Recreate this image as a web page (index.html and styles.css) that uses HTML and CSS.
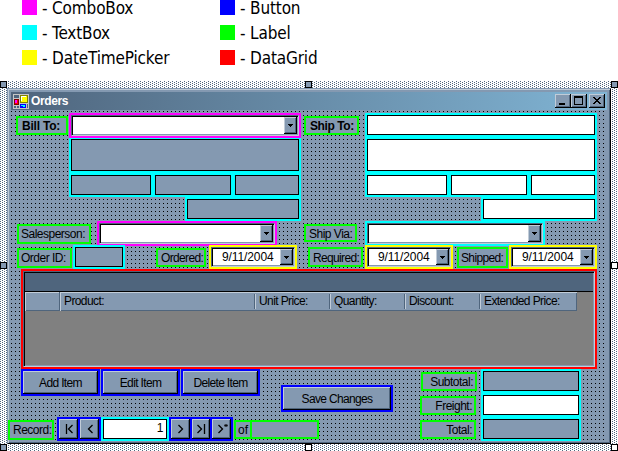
FILE: index.html
```html
<!DOCTYPE html>
<html lang="en">
<head>
<meta charset="utf-8">
<title>Orders</title>
<link rel="stylesheet" href="styles.css">
</head>
<body>
<svg width="0" height="0" class="defs"><symbol id="arrow" viewBox="0 0 5 3"><path d="M0 0H5V1H0ZM1 1H4V2H1ZM2 2H3V3H2Z"/></symbol></svg>
<ul class="legend">
  <li><i class="magenta"></i>- ComboBox</li><li><i class="blue"></i>- Button</li>
  <li><i class="cyan"></i>- TextBox</li><li><i class="green"></i>- Label</li>
  <li><i class="yellow"></i>- DateTimePicker</li><li><i class="red"></i>- DataGrid</li>
</ul>
<main class="surface">
  <b class="handle tl"></b><b class="handle tc"></b><b class="handle tr"></b>
  <b class="handle ml"></b><b class="handle mr open"></b>
  <b class="handle bl"></b><b class="handle bc open"></b><b class="handle br open"></b>
  <section class="window">
    <header class="title">
      <svg class="app" width="16" height="16" viewBox="0 0 16 16" shape-rendering="crispEdges"><path fill="#c6c6c6" d="M0 0H16V15H0Z"/><path fill="#4f657d" d="M1 1H6V4H1ZM1 12H3V14H1ZM4 12H6V14H4ZM14 10H15V14H14Z"/><path fill="#800000" d="M1 5H6V11H1Z"/><path fill="#f0f" d="M2 6H4V9H2Z"/><path fill="#f00" d="M4 6H5V10H2V9H4Z"/><path fill="#808000" d="M7 1H15V9H7Z"/><path fill="#ff0" d="M8 2H14V8H8Z"/><path fill="#fff" d="M8 2H13V3H9V7H8Z"/><path fill="#00f" d="M7 10H13V14H7Z"/><path fill="#0ff" d="M8 11H12V13H10V12H8Z"/></svg>
      <h1>Orders</h1>
      <span class="cap"><svg width="16" height="14" shape-rendering="crispEdges"><path d="M4 9H10V11H4Z"/></svg></span>
      <span class="cap"><svg width="16" height="14" shape-rendering="crispEdges"><path fill-rule="evenodd" d="M3 2H12V11H3ZM4 4V10H11V4Z"/></svg></span>
      <span class="cap close"><svg width="16" height="14" shape-rendering="crispEdges"><path d="M4 3H6V4H7V5H9V4H10V3H12V4H11V5H10V6H9V7H10V8H11V9H12V10H10V9H9V8H7V9H6V10H4V9H5V8H6V7H7V6H6V5H5V4H4Z"/></svg></span>
    </header>
    <div class="client">
      <div class="addresses">
        <div class="label bold billto">Bill To:</div>
        <div class="fields">
          <div class="combo magenta-b"><span class="inset"><span class="drop"><svg width="5" height="3"><use href="#arrow"/></svg></span></span></div>
          <div class="block short">
            <div class="tb tall"></div>
            <div class="trio"><div class="tb city"></div><div class="tb region"></div><div class="tb zip"></div></div>
          </div>
          <div class="country"><div class="tb"></div></div>
        </div>
        <div class="label bold shipto">Ship To:</div>
        <div class="fields white ship">
          <div class="block">
            <div class="tb"></div><div class="tb tall"></div>
            <div class="trio"><div class="tb city"></div><div class="tb region"></div><div class="tb zip"></div></div>
          </div>
          <div class="country"><div class="tb"></div></div>
        </div>
      </div>
      <div class="row">
        <div class="label sales">Salesperson:</div>
        <div class="combo magenta-b salesbox"><span class="inset"><span class="drop"><svg width="5" height="3"><use href="#arrow"/></svg></span></span></div>
        <div class="label via">Ship Via:</div>
        <div class="combo cyan-b viabox"><span class="inset"><span class="drop"><svg width="5" height="3"><use href="#arrow"/></svg></span></span></div>
      </div>
      <div class="row">
        <div class="label orderid">Order ID:</div>
        <div class="idbox"><div class="tb"></div></div>
        <div class="label ordered">Ordered:</div>
        <div class="combo date d1"><span class="inset"><time>9/11/2004</time><span class="drop"><svg width="5" height="3"><use href="#arrow"/></svg></span></span></div>
        <div class="label required">Required:</div>
        <div class="combo date d2"><span class="inset"><time>9/11/2004</time><span class="drop"><svg width="5" height="3"><use href="#arrow"/></svg></span></span></div>
        <div class="label shipped">Shipped:</div>
        <div class="combo date d3"><span class="inset"><time>9/11/2004</time><span class="drop"><svg width="5" height="3"><use href="#arrow"/></svg></span></span></div>
      </div>
      <div class="grid"><div class="inset">
        <div class="caption"></div>
        <div class="heads"><span class="h0"></span><span class="h1">Product:</span><span>Unit Price:</span><span>Quantity:</span><span>Discount:</span><span class="h5">Extended Price:</span></div>
      </div></div>
      <div class="bottom">
        <div class="actions">
          <div class="commands">
            <div class="btn"><button>Add Item</button></div><div class="btn"><button>Edit Item</button></div><div class="btn"><button>Delete Item</button></div>
            <div class="btn save"><button>Save Changes</button></div>
          </div>
          <div class="nav">
            <div class="label record">Record:</div>
            <div class="btn first"><button><svg width="16" height="16"><path d="M5.5 3V13M11.5 4L7.5 8L11.5 12"/></svg></button><button><svg width="16" height="16"><path d="M10.5 4L6.5 8L10.5 12"/></svg></button></div>
            <div class="number"><div class="tb">1</div></div>
            <div class="btn last"><button><svg width="16" height="16"><path d="M6.5 4L10.5 8L6.5 12"/></svg></button><button><svg width="16" height="16"><path d="M4.5 4L8.5 8L4.5 12M11.5 3V13"/></svg></button><button><svg width="16" height="16"><path d="M4.5 4L8.5 8L4.5 12"/><path class="star" d="M10 4.5H14M12 3V6M10.8 3.2L13.2 5.8M13.2 3.2L10.8 5.8"/></svg></button></div>
            <div class="label of">of</div><div class="label count"></div>
          </div>
        </div>
        <div class="totals"><div class="label sub">Subtotal:</div><div class="label">Freight:</div><div class="label">Total:</div></div>
        <div class="amounts"><div class="tb"></div><div class="tb freight"></div><div class="tb"></div></div>
      </div>
    </div>
  </section>
</main>
</body>
</html>
```
FILE: styles.css
```css
:root { --face: #8499b1; --dark: #4f657d; --light: #c1ccd8; }
* { box-sizing: border-box; }
body { margin: 0; width: 618px; height: 451px; overflow: hidden; background: #fff; color: #000; font: 12px/14px "Liberation Sans", Arial, sans-serif; letter-spacing: -.5px; }
.defs { position: absolute; }

.legend { display: grid; grid-template-columns: 198px 200px; grid-auto-rows: 25px; height: 81px; margin: 0; padding: 0 0 0 22px; list-style: none; font: 17px/17px "DejaVu Sans Condensed", "DejaVu Sans", sans-serif; font-stretch: condensed; letter-spacing: -.15px; }
.legend li { display: flex; gap: 5px; white-space: nowrap; }
.legend i { width: 15px; height: 15px; }
.magenta { background: #f0f; } .blue { background: #00f; } .cyan { background: #0ff; }
.green { background: #0f0; } .yellow { background: #ff0; } .red { background: #f00; }

.surface { position: relative; height: 370px; padding: 7px; background: conic-gradient(from 270deg at 1px 1px, var(--dark) 25%, transparent 0) 0 0 / 4px 2px, conic-gradient(from 270deg at 1px 1px, var(--dark) 25%, transparent 0) 2px 1px / 4px 2px; }
.handle { position: absolute; width: 7px; height: 7px; border: 1px solid #000; background: var(--face); }
.open { background: #fff; }
.tl, .tc, .tr { top: 0; } .ml, .mr { top: 181px; } .bl, .bc, .br { bottom: 0; }
.tl, .ml, .bl { left: 0; } .tc, .bc { left: 305px; } .tr, .mr, .br { right: 0; }

.window { width: 604px; height: 356px; padding: 3px; border: 1px solid; border-color: var(--face) #000 #000 var(--face); background: var(--face); box-shadow: inset 1px 1px var(--light), inset -1px -1px var(--dark); }
.title { display: flex; align-items: center; height: 18px; padding: 0 2px; background: linear-gradient(90deg, #4f657d, #80b4d4); }
.app { margin-top: 1px; }
h1 { flex: 1; margin: 0 0 0 2px; color: #fff; font-size: 12px; line-height: 16px; letter-spacing: -.4px; }
.cap { width: 16px; height: 14px; background: var(--face); box-shadow: inset -1px -1px #000, inset 1px 1px var(--light), inset -2px -2px var(--dark); }
.cap svg { display: block; }
.close { margin-left: 2px; }

.client { height: 330px; margin-top: 1px; background: conic-gradient(from 270deg at 1px 1px, #000 25%, transparent 0) 0 0 / 4px 4px; width: 596px; }
.label { flex: none; border: 2px solid #0f0; background: var(--face); white-space: nowrap; padding-left: 2px; height: 20px; line-height: 17px; margin-top: 3px; }
.bold { font-weight: bold; height: 19px; padding-left: 4px; letter-spacing: -.2px; }
.addresses { display: flex; height: 110px; padding-top: 2px; }
.billto { width: 52px; margin-left: 5px; }
.shipto { width: 55px; margin-left: 3px; letter-spacing: -.4px; }
.fields { width: 232px; margin-left: 1px; }
.ship { margin-left: 6px; }
.tb { height: 20px; border: 1px solid #000; background: var(--face); }
.white .tb { background: #fff; }
.tb.tall { height: 32px; }
.block { display: grid; gap: 4px; padding: 2px; background: #0ff; }
.short { padding-top: 1px; }
.trio { display: grid; grid-template-columns: 80px 76px 64px; gap: 4px; }
.country { width: 116px; margin-left: auto; padding: 2px; background: #0ff; }

.combo { flex: none; height: 25px; border: 2px solid; }
.magenta-b { border-color: #f0f; } .cyan-b { border-color: #0ff; }
.inset { display: flex; height: 100%; background: #fff; border: 1px solid; border-color: var(--dark) var(--light) var(--light) var(--dark); box-shadow: inset 1px 1px #000, inset -1px -1px var(--face); padding: 1px; justify-content: flex-end; }
.drop { display: flex; align-items: center; justify-content: center; width: 13px; height: 100%; background: var(--face); box-shadow: inset -1px -1px #000, inset 1px 1px var(--light), inset -2px -2px var(--dark); }
.row { display: flex; height: 24px; position: relative; }
.sales { width: 74px; margin-left: 6px; }
.salesbox { width: 180px; margin-left: 6px; }
.via { width: 53px; margin-left: 27px; height: 18px; padding-left: 3px; }
.viabox { width: 180px; margin-left: 8px; }
.orderid { width: 55px; margin-left: 6px; }
.idbox { width: 52px; margin-left: 1px; padding: 2px; background: #0ff; }
.ordered { width: 50px; height: 19px; margin-left: 31px; padding-left: 3px; letter-spacing: -.65px; }
.date { width: 88px; height: 24px; border-color: #ff0; }
.date time { flex: 1; padding-left: 9px; line-height: 17px; letter-spacing: -.1px; }
.d1 { margin-left: 3px; } .d2 { margin-left: 2px; } .d3 { margin-left: 1px; }
.required { width: 55px; margin: 2px 0 0 11px; padding-left: 3px; line-height: 18px; letter-spacing: -.65px; }
.shipped { width: 51px; height: 21px; margin: 2px 0 0 4px; line-height: 18px; letter-spacing: -.65px; }

.grid { width: 576px; height: 100px; margin-left: 10px; border: 2px solid #f00; }
.grid .inset { display: block; background: #808080; }
.caption { height: 19px; border-bottom: 1px solid #000; background: var(--dark); }
.heads { display: flex; align-items: center; width: 552px; height: 19px; background: var(--face); box-shadow: inset 0 1px var(--light), inset -1px -1px var(--dark); line-height: 15px; letter-spacing: -.6px; }
.heads span { width: 75px; height: 15px; padding-left: 4px; border-left: 1px solid var(--dark); box-shadow: inset 1px 0 var(--light); white-space: nowrap; }
.heads .h0 { width: 34px; height: 19px; border: 0; }
.heads .h1 { width: 195px; height: 19px; padding: 2px 0 0 4px; }
.heads .h5 { width: 97px; }

.bottom { display: flex; }
.actions { width: 409px; }
.commands { display: flex; gap: 1px; height: 48px; padding-left: 10px; }
.btn { display: flex; width: 79px; height: 27px; border: 2px solid #00f; background: #00f; }
button { flex: 1; margin: 0; padding: 0; border: 0; background: var(--face); box-shadow: inset -1px -1px #000, inset 1px 1px var(--light), inset -2px -2px var(--dark); font: inherit; color: #000; letter-spacing: -.65px; white-space: nowrap; }
.save { width: 112px; margin: 16px 0 0 20px; }
.nav { display: flex; height: 24px; }
.record { width: 46px; margin-left: -3px; padding-left: 3px; }
.nav .btn { height: 24px; gap: 2px; }
.nav svg { display: block; margin: auto; fill: none; stroke: #000; stroke-width: 1.3; }
.nav .star { stroke-width: .7; }
.nav .first { width: 44px; margin-left: 3px; }
.number { width: 68px; padding: 2px; background: #0ff; }
.number .tb { padding-right: 3px; background: #fff; text-align: right; line-height: 17px; }
.nav .last { width: 64px; }
.of { width: 18px; height: 19px; margin-left: 1px; letter-spacing: 0; }
.count { width: 69px; height: 19px; margin-left: -2px; }
.totals { width: 56px; }
.totals .label { height: 19px; margin: 5px 0 0; padding-right: 2px; text-align: right; }
.totals .sub { margin: 3px -1px 0 1px; }
.amounts { display: grid; gap: 4px; width: 100px; height: 72px; margin-left: 5px; padding: 2px; background: #0ff; }
.amounts .freight { background: #fff; }
```
